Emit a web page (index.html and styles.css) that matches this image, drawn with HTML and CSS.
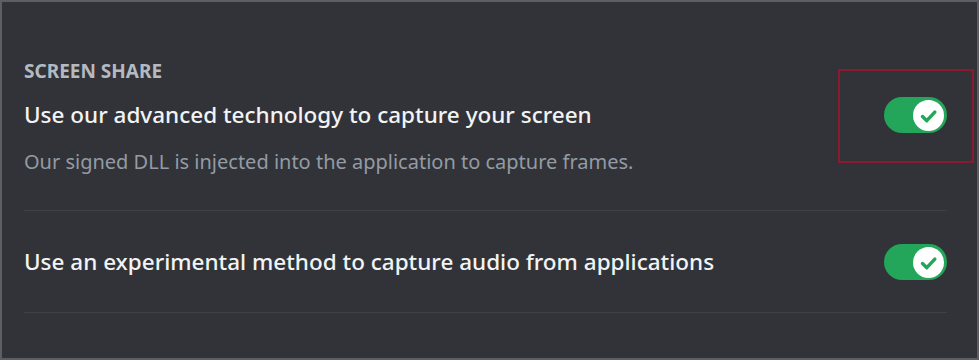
FILE: index.html
```html
<!DOCTYPE html>
<html lang="en">
<head>
<meta charset="utf-8">
<title>Screen Share Settings</title>
<link rel="stylesheet" href="styles.css">
</head>
<body>
<div class="panel">
  <h2 class="section-title">Screen Share</h2>
  <div class="row">
    <div class="row-label">Use our advanced technology to capture your screen</div>
    <div class="switch on" role="switch" aria-checked="true">
      <span class="knob">
        <svg viewBox="0 0 31 31" width="31" height="31"><path d="M9.5 16.5l4.3 4.2 8-8.6" fill="none" stroke="#23a55a" stroke-width="3.4" stroke-linecap="round" stroke-linejoin="round"/></svg>
      </span>
    </div>
  </div>
  <p class="row-desc">Our signed DLL is injected into the application to capture frames.</p>
  <div class="divider"></div>
  <div class="row row-second">
    <div class="row-label">Use an experimental method to capture audio from applications</div>
    <div class="switch on" role="switch" aria-checked="true">
      <span class="knob">
        <svg viewBox="0 0 31 31" width="31" height="31"><path d="M9.5 16.5l4.3 4.2 8-8.6" fill="none" stroke="#23a55a" stroke-width="3.4" stroke-linecap="round" stroke-linejoin="round"/></svg>
      </span>
    </div>
  </div>
  <div class="divider divider-last"></div>
  <div class="highlight"></div>
</div>
</body>
</html>
```

FILE: styles.css
```css
* { box-sizing: border-box; }
html, body { margin: 0; padding: 0; }
body {
  width: 979px;
  height: 360px;
  background: #313338;
  font-family: "Noto Sans", "Open Sans", sans-serif;
}
.panel {
  position: relative;
  width: 979px;
  height: 360px;
  border: 2px solid #5d5e63;
  background: #313338;
  padding: 59px 30px 0 22px;
}
.section-title {
  margin: 0;
  font-size: 19px;
  line-height: 20px;
  font-weight: 700;
  text-transform: uppercase;
  color: #b5bac1;
}
.row {
  display: flex;
  align-items: center;
  justify-content: space-between;
  height: 36px;
  margin-top: 16px;
}
.row-label {
  font-size: 22.5px;
  line-height: 26px;
  font-weight: 500;
  color: #f2f3f5;
}
.row-desc {
  margin: 17px 0 0 0;
  font-size: 20px;
  line-height: 24px;
  color: #949ba4;
}
.divider {
  height: 1px;
  background: #3f4147;
  margin-top: 36px;
}
.row-second { margin-top: 33px; }
.divider-last { margin-top: 32px; }
.switch {
  width: 63px;
  height: 36px;
  border-radius: 18px;
  background: #23a55a;
  display: flex;
  align-items: center;
  justify-content: flex-end;
  padding-right: 3px;
  flex-shrink: 0;
}
.knob {
  width: 31px;
  height: 31px;
  border-radius: 50%;
  background: #ffffff;
  display: flex;
  align-items: center;
  justify-content: center;
}
.knob svg { display: block; }
.highlight {
  position: absolute;
  left: 836px;
  top: 67px;
  width: 136px;
  height: 94px;
  border: 2px solid #8b1a30;
}
```
